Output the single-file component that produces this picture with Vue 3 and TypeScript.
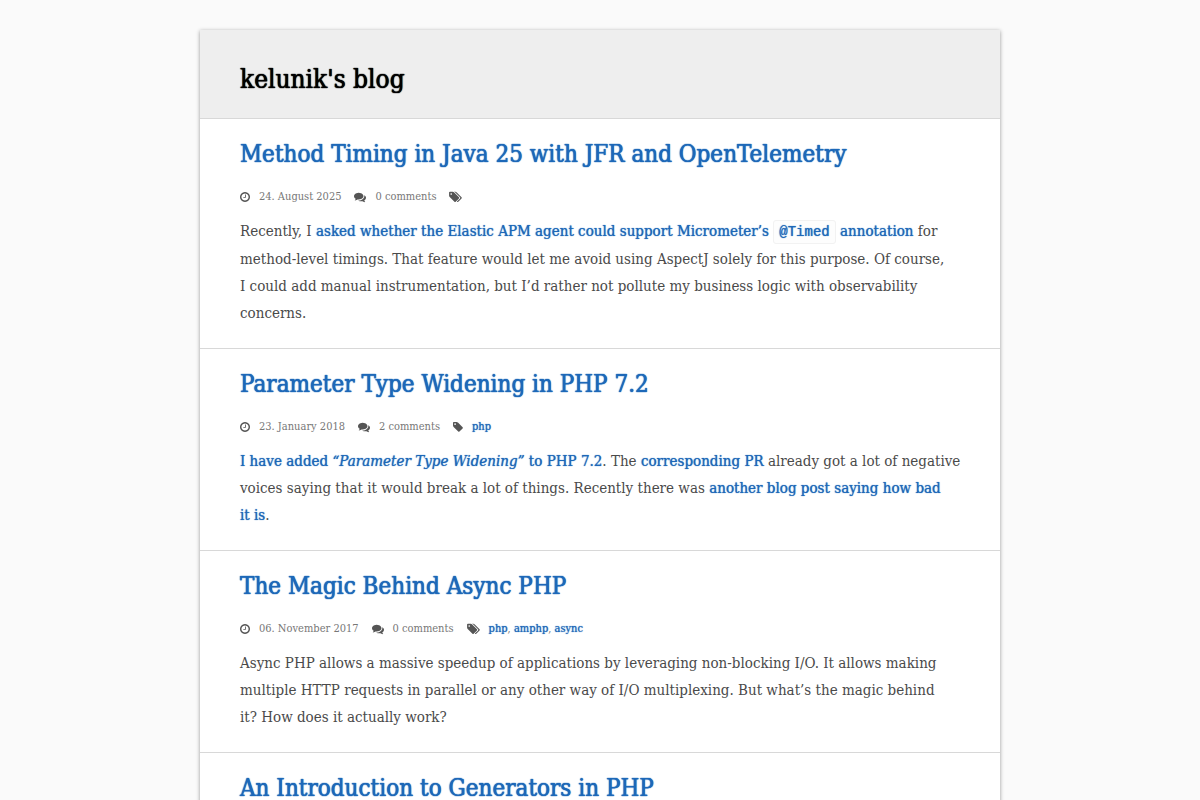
<script setup lang="ts">
type IconName = 'clock' | 'comments' | 'tag' | 'tags'

interface Icon {
  viewBox: string
  width: number
  path: string
}

interface Piece {
  kind: 'text' | 'link' | 'em' | 'code'
  text: string
}

interface Segment {
  href?: string
  pieces: Piece[]
}

interface Post {
  slug: string
  title: string
  date: string
  iso: string
  comments: string
  tags: string[]
  tagIcon: IconName
  body: Segment[]
}

const icons: Record<IconName, Icon> = {
  clock: {
    viewBox: '128 0 1536 1792',
    width: 10,
    path: 'M1024 544v448q0 14-9 23t-23 9h-320q-14 0-23-9t-9-23v-64q0-14 9-23t23-9h224v-352q0-14 9-23t23-9h64q14 0 23 9t9 23zm416 352q0-148-73-273t-198-198-273-73-273 73-198 198-73 273 73 273 198 198 273 73 273-73 198-198 73-273zm224 0q0 209-103 385.5t-279.5 279.5-385.5 103-385.5-103-279.5-279.5-103-385.5 103-385.5 279.5-279.5 385.5-103 385.5 103 279.5 279.5 103 385.5z',
  },
  comments: {
    viewBox: '0 0 1792 1792',
    width: 12,
    path: 'M1408 768q0 139-94 257t-256.5 186.5-353.5 68.5q-86 0-176-16-124 88-278 128-36 9-86 16h-3q-11 0-20.5-8t-11.5-21q-1-3-1-6.5t.5-6.5 2-6l2.5-5 3.5-5.5 4-5 4.5-5 4-4.5q5-6 23-25t26-29.5 22.5-29 25-38.5 20.5-44q-124-72-195-177t-71-224q0-139 94-257t256.5-186.5 353.5-68.5 353.5 68.5 256.5 186.5 94 257zm384 256q0 120-71 224.5t-195 176.5q10 24 20.5 44t25 38.5 22.5 29 26 29.5 23 25q1 1 4 4.5t4.5 5 4 5 3.5 5.5l2.5 5 2 6 .5 6.5-1 6.5q-3 14-13 22t-22 7q-50-7-86-16-154-40-278-128-90 16-176 16-271 0-472-132 58 4 88 4 161 0 309-45t264-129q125-92 192-212t67-254q0-77-23-152 129 71 204 178t75 230z',
  },
  tag: {
    viewBox: '128 0 1536 1792',
    width: 10,
    path: 'M576 448q0-53-37.5-90.5t-90.5-37.5-90.5 37.5-37.5 90.5 37.5 90.5 90.5 37.5 90.5-37.5 37.5-90.5zm1067 576q0 53-37 90l-491 492q-39 37-91 37-53 0-90-37l-715-716q-38-37-64.5-101t-26.5-117v-416q0-52 38-90t90-38h416q53 0 117 26.5t102 64.5l715 714q37 39 37 91z',
  },
  tags: {
    viewBox: '0 0 1920 1792',
    width: 13,
    path: 'M448 448q0-53-37.5-90.5t-90.5-37.5-90.5 37.5-37.5 90.5 37.5 90.5 90.5 37.5 90.5-37.5 37.5-90.5zm1067 576q0 53-37 90l-491 492q-39 37-91 37-53 0-90-37l-715-716q-38-37-64.5-101t-26.5-117v-416q0-52 38-90t90-38h416q53 0 117 26.5t102 64.5l715 714q37 39 37 91zm384 0q0 53-37 90l-491 492q-39 37-91 37-36 0-59-14t-53-45l470-470q37-37 37-90 0-52-37-91l-715-714q-38-38-102-64.5t-117-26.5h224q53 0 117 26.5t102 64.5l715 714q37 39 37 91z',
  },
}

const t = (text: string): Segment => ({ pieces: [{ kind: 'text', text }] })

const posts: Post[] = [
  {
    slug: 'method-timing',
    title: 'Method Timing in Java 25 with JFR and OpenTelemetry',
    date: '24. August 2025',
    iso: '2025-08-24',
    comments: '0 comments',
    tags: [],
    tagIcon: 'tags',
    body: [
      t('Recently, I '),
      {
        href: '#micrometer',
        pieces: [
          { kind: 'text', text: 'asked whether the Elastic APM agent could support Micrometer’s ' },
          { kind: 'code', text: '@Timed' },
          { kind: 'text', text: ' annotation' },
        ],
      },
      t(' for method-level timings. That feature would let me avoid using AspectJ solely for this purpose. Of course, I\u00a0could add manual instrumentation, but I’d rather not pollute my business logic with observability concerns.'),
    ],
  },
  {
    slug: 'parameter-type-widening',
    title: 'Parameter Type Widening in PHP 7.2',
    date: '23. January 2018',
    iso: '2018-01-23',
    comments: '2 comments',
    tags: ['php'],
    tagIcon: 'tag',
    body: [
      {
        href: '#widening',
        pieces: [
          { kind: 'text', text: 'I have added ' },
          { kind: 'em', text: '“Parameter Type Widening”' },
          { kind: 'text', text: ' to PHP 7.2' },
        ],
      },
      t('. The '),
      { href: '#pr', pieces: [{ kind: 'text', text: 'corresponding PR' }] },
      t(' already got a lot of negative voices saying that it would break a lot of things. Recently there was '),
      { href: '#reply', pieces: [{ kind: 'text', text: 'another blog post saying how bad it\u00a0is' }] },
      t('.'),
    ],
  },
  {
    slug: 'async-php',
    title: 'The Magic Behind Async PHP',
    date: '06. November 2017',
    iso: '2017-11-06',
    comments: '0 comments',
    tags: ['php', 'amphp', 'async'],
    tagIcon: 'tags',
    body: [
      t('Async PHP allows a massive speedup of applications by leveraging non-blocking I/O. It allows making multiple HTTP requests in parallel or any other way of I/O multiplexing. But what’s the magic behind it?\u00a0How does it actually work?'),
    ],
  },
  {
    slug: 'generators',
    title: 'An Introduction to Generators in PHP',
    date: '',
    iso: '',
    comments: '',
    tags: [],
    tagIcon: 'tags',
    body: [],
  },
]
</script>

<template>
  <div class="page">
    <div class="card">
      <header class="site-header">
        <h1>kelunik's blog</h1>
      </header>
      <main>
        <article v-for="post in posts" :key="post.slug" class="post">
          <h2><a :href="'#' + post.slug">{{ post.title }}</a></h2>
          <div v-if="post.date" class="meta">
            <span class="item">
              <svg :viewBox="icons.clock.viewBox" :width="icons.clock.width" height="12" aria-hidden="true"><path :d="icons.clock.path" /></svg>
              <time :datetime="post.iso">{{ post.date }}</time>
            </span>
            <span class="item">
              <svg :viewBox="icons.comments.viewBox" :width="icons.comments.width" height="12" aria-hidden="true"><path :d="icons.comments.path" /></svg>
              <span>{{ post.comments }}</span>
            </span>
            <span class="item">
              <svg :viewBox="icons[post.tagIcon].viewBox" :width="icons[post.tagIcon].width" height="12" aria-hidden="true"><path :d="icons[post.tagIcon].path" /></svg>
              <span v-if="post.tags.length"><template v-for="(tag, i) in post.tags" :key="tag"><template v-if="i > 0">, </template><a :href="'#tag-' + tag">{{ tag }}</a></template></span>
            </span>
          </div>
          <p v-if="post.body.length"><template v-for="(seg, i) in post.body" :key="i"><a v-if="seg.href" :href="seg.href"><template v-for="(piece, j) in seg.pieces" :key="j"><code v-if="piece.kind === 'code'">{{ piece.text }}</code><em v-else-if="piece.kind === 'em'">{{ piece.text }}</em><template v-else>{{ piece.text }}</template></template></a><template v-for="(piece, j) in seg.pieces" v-else :key="j">{{ piece.text }}</template></template></p>
        </article>
      </main>
    </div>
  </div>
</template>

<style>
html {
  background: #fafafa;
}
html,
body {
  height: 100%;
  overflow: hidden;
}
</style>

<style scoped>
.page {
  padding: 30px 20px;
  font-family: "DejaVu Serif Condensed", "DejaVu Serif", serif;
  color: #4a4a4a;
}
.card {
  max-width: 800px;
  margin: 0 auto;
  background: #fff;
  box-shadow: 0 1px 4px rgba(0, 0, 0, 0.4);
}
.site-header {
  padding: 31px 40px 21px;
  background: #eee;
  border-bottom: 1px solid #d8d8d8;
}
h1 {
  margin: 0;
  font-size: 26px;
  line-height: 36px;
  font-weight: 400;
  color: #000;
  text-shadow: 0 0 1px currentColor, 0 0 1px currentColor;
}
.post {
  padding: 20px 40px 21px;
  border-bottom: 1px solid #d8d8d8;
}
h2 {
  margin: 0;
  font-size: 24px;
  line-height: 30px;
  font-weight: 400;
}
a {
  color: #1d68b8;
  text-decoration: none;
  text-shadow: 0 0 1px currentColor;
}
h2 a {
  text-shadow: 0 0 1px currentColor, 0 0 1px currentColor;
}
.meta {
  display: flex;
  gap: 13px;
  margin-top: 18px;
  font-size: 11px;
  line-height: 20px;
  color: #777;
}
.item {
  display: flex;
  align-items: center;
  gap: 9px;
}
svg {
  fill: #555;
}
p {
  margin: 11px -4px 0 0;
  font-size: 15px;
  line-height: 27px;
}
code {
  padding: 3px 5px;
  border: 1px solid #f2f2f2;
  border-radius: 3px;
  background: #fdfdfd;
  font-family: "Liberation Mono", monospace;
  font-size: 14px;
}
</style>
